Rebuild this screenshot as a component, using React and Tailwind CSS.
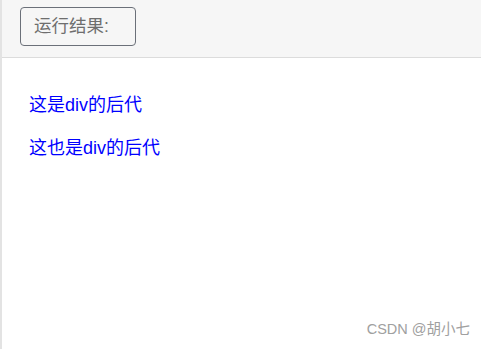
import React from "react";

export default function App() {
  return (
    <div
      className="relative w-[481px] h-[349px] bg-white border-l-2 border-[#e3e3e3] overflow-hidden"
      style={{ fontFamily: '"Liberation Sans", "Noto Sans CJK SC", sans-serif' }}
    >
      <div className="h-[58px] bg-[#f6f6f6] border-b border-[#dcdcdc] pl-[18px] pt-[7px]">
        <div className="w-[116px] h-[39px] border border-[#6b7079] rounded-[4px] flex items-center pl-[13px] text-[17.5px] text-[#6e6e6e]">
          运行结果:
        </div>
      </div>
      <div className="pl-[27px] pt-[34px] text-[18px] text-[#0000ff] leading-[26px]">
        <p>这是div的后代</p>
        <p className="mt-[17px]">这也是div的后代</p>
      </div>
      <div className="absolute right-[11px] bottom-[8px] text-[14.5px] text-[#a0a0a0]">
        CSDN @胡小七
      </div>
    </div>
  );
}
